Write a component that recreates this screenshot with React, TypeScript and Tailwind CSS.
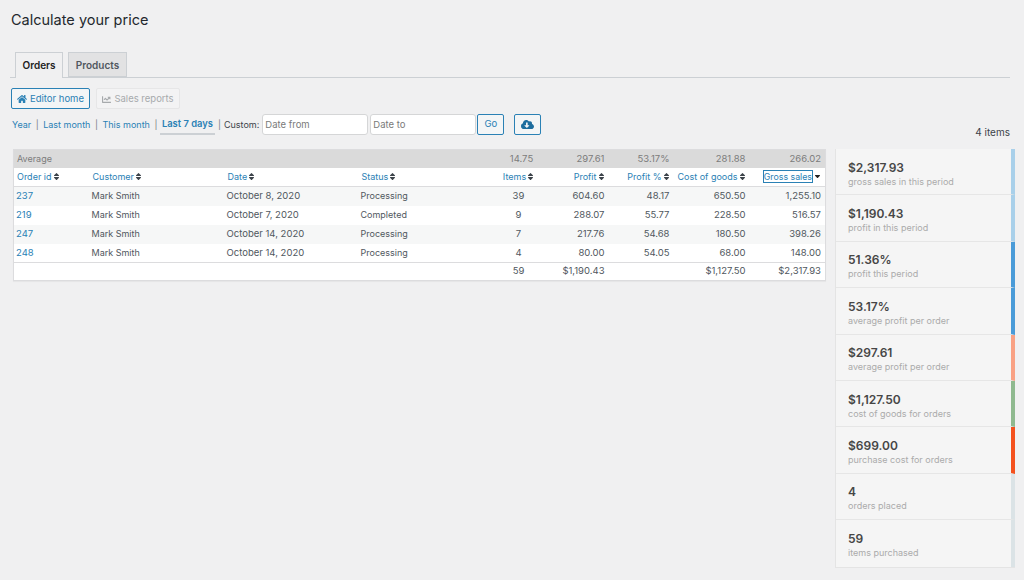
import { FaHome, FaChartLine, FaCloudDownloadAlt, FaSort, FaSortDown } from 'react-icons/fa';

const orders = [
  { id: '237', customer: 'Mark Smith', date: 'October 8, 2020', status: 'Processing', items: '39', profit: '604.60', pct: '48.17', cost: '650.50', gross: '1,255.10' },
  { id: '219', customer: 'Mark Smith', date: 'October 7, 2020', status: 'Completed', items: '9', profit: '288.07', pct: '55.77', cost: '228.50', gross: '516.57' },
  { id: '247', customer: 'Mark Smith', date: 'October 14, 2020', status: 'Processing', items: '7', profit: '217.76', pct: '54.68', cost: '180.50', gross: '398.26' },
  { id: '248', customer: 'Mark Smith', date: 'October 14, 2020', status: 'Processing', items: '4', profit: '80.00', pct: '54.05', cost: '68.00', gross: '148.00' },
];

const stats = [
  { value: '$2,317.93', label: 'gross sales in this period', bar: 'border-r-[#a9d0ea]' },
  { value: '$1,190.43', label: 'profit in this period', bar: 'border-r-[#a9d0ea]' },
  { value: '51.36%', label: 'profit this period', bar: 'border-r-[#4a9bd8]' },
  { value: '53.17%', label: 'average profit per order', bar: 'border-r-[#4a9bd8]' },
  { value: '$297.61', label: 'average profit per order', bar: 'border-r-[#f9a184]' },
  { value: '$1,127.50', label: 'cost of goods for orders', bar: 'border-r-[#8fb98f]' },
  { value: '$699.00', label: 'purchase cost for orders', bar: 'border-r-[#f4511e]' },
  { value: '4', label: 'orders placed', bar: 'border-r-[#dbe3e6]' },
  { value: '59', label: 'items purchased', bar: 'border-r-[#dbe3e6]' },
];

const link = 'text-[#2a81b5]';
const filters = ['Year', 'Last month', 'This month'];

function SortHead({ label, className = '' }: { label: string; className?: string }) {
  return (
    <th className={`h-[19px] whitespace-nowrap text-[9px] font-normal ${className}`}>
      <span className={link}>{label}</span>
      <FaSort className="mr-[-1px] inline size-[9px] align-[-1px] text-[#3c434a]" />
    </th>
  );
}

export default function App() {
  return (
    <div className="h-[580px] w-[1024px] overflow-hidden bg-[#f0f0f1] font-['Inter',sans-serif] text-[9.5px] text-[#50575e]">
      <h1 className="pl-[11px] pt-[11px] text-[14.5px] leading-[18px] text-[#23282d]">Calculate your price</h1>

      <div className="ml-[10px] mr-[14px] mt-[23px] flex h-[26px] gap-[5px] border-b border-[#ccd0d4] pl-[5px]">
        <div className="flex h-[26px] w-[48px] items-center justify-center border border-b-0 border-[#ccd0d4] bg-[#f0f0f1] text-[10px] font-semibold text-[#222]">Orders</div>
        <div className="flex h-[25px] w-[59px] items-center justify-center border border-[#ccd0d4] bg-[#e2e2e3] pt-[1px] text-[10px] font-semibold text-[#50575e]">Products</div>
      </div>

      <div className="ml-[11px] mt-[10px] flex gap-[6px]">
        <button className="flex h-[21px] w-[79px] items-center justify-center gap-[3px] rounded-[2px] border border-[#2a81b5] bg-[#f3f5f6] pt-[1px] text-[#2a81b5]">
          <FaHome className="size-[10px]" />
          Editor home
        </button>
        <button className="flex h-[21px] w-[84px] items-center justify-center gap-[3px] rounded-[2px] border border-[#e6e6e7] bg-[#f3f3f4] pt-[1px] text-[#a7aaad]">
          <FaChartLine className="size-[9px]" />
          Sales reports
        </button>
      </div>

      <div className="ml-[12px] mr-[14px] mt-[5px] flex h-[26px] items-start">
        <div className="flex h-[21px] items-center text-[9px]">
          {filters.map(f => (
            <span key={f} className="flex items-center">
              <span className={link}>{f}</span>
              <span className="mx-[4.5px] text-[#787c82]">|</span>
            </span>
          ))}
          <span className="ml-[-2px] border-b-2 border-[#ccd0d4] px-[2px] pb-[1px] pt-[3px] text-[9.4px] font-semibold text-[#2a81b5]">Last 7 days</span>
          <span className="mx-[3px] text-[#787c82]">|</span>
          <span className="mr-[3px] text-[#3c434a]">Custom:</span>
          <input placeholder="Date from" className="h-[21px] w-[106px] rounded-[3px] border border-[#d5d6d7] bg-white px-[2px] text-[9.5px] placeholder:text-[#7a7a7a]" />
          <input placeholder="Date to" className="ml-[2px] h-[21px] w-[106px] rounded-[3px] border border-[#d5d6d7] bg-white px-[2px] text-[9.5px] placeholder:text-[#7a7a7a]" />
          <button className="ml-[1px] h-[21px] w-[27px] rounded-[2px] border border-[#2a81b5] bg-[#f3f5f6] text-[9.5px] text-[#2a81b5]">Go</button>
          <button className="ml-[10px] flex h-[21px] w-[27px] items-center justify-center rounded-[2px] border border-[#2a81b5] bg-[#f3f5f6] text-[#1d6d9e]">
            <FaCloudDownloadAlt className="size-[13px]" />
          </button>
        </div>
        <span className="ml-auto self-end text-[10px] text-[#3c434a]">4 items</span>
      </div>

      <div className="ml-[13px] mt-[9px] flex items-start gap-[9px]">
        <table className="w-[812px] table-fixed border-collapse border border-[#dcdcde] bg-white shadow-[0_1px_1px_rgba(0,0,0,0.04)]">
          <colgroup>
            <col className="w-[75px]" />
            <col className="w-[135px]" />
            <col className="w-[134px]" />
            <col className="w-[133px]" />
            <col className="w-[56px]" />
            <col className="w-[62px]" />
            <col className="w-[65px]" />
            <col className="w-[76px]" />
            <col className="w-[76px]" />
          </colgroup>
          <thead>
            <tr className="h-[18px] bg-[#dadada] text-[#7c7c7c]">
              <td className="px-[3px] text-[9px]">Average</td>
              <td colSpan={3} />
              <td className="pl-[6px] text-center">14.75</td>
              <td className="px-[4px] text-right">297.61</td>
              <td className="px-[4px] text-right">53.17%</td>
              <td className="px-[4px] text-right">281.88</td>
              <td className="px-[4px] text-right">266.02</td>
            </tr>
            <tr className="border-b border-[#dcdcde]">
              <SortHead label="Order id" className="px-[3px] text-left" />
              <SortHead label="Customer" className="px-[4px] text-left" />
              <SortHead label="Date" className="px-[4px] text-left" />
              <SortHead label="Status" className="px-[4px] text-left" />
              <SortHead label="Items" className="text-center" />
              <SortHead label="Profit" className="px-[4px] text-right" />
              <SortHead label="Profit %" className="px-[4px] text-right" />
              <SortHead label="Cost of goods" className="pr-[4px] text-right" />
              <th className="whitespace-nowrap pr-[3px] text-right font-normal">
                <span className={`${link} inline-block border border-[#2a81b5] text-[8.8px] leading-[11px]`}>Gross sales</span>
                <FaSortDown className="inline size-[9px] align-[1px] text-[#222]" />
              </th>
            </tr>
          </thead>
          <tbody>
            {orders.map(o => (
              <tr key={o.id} className="h-[19px] leading-[12px] odd:bg-[#f6f7f7]">
                <td className={`px-[2px] ${link}`}>{o.id}</td>
                <td className="px-[3px] text-[9px]">{o.customer}</td>
                <td className="px-[3px]">{o.date}</td>
                <td className="px-[3px] text-[9px]">{o.status}</td>
                <td className="text-center">{o.items}</td>
                <td className="px-[4px] text-right">{o.profit}</td>
                <td className="px-[4px] text-right">{o.pct}</td>
                <td className="px-[4px] text-right">{o.cost}</td>
                <td className="px-[4px] text-right">{o.gross}</td>
              </tr>
            ))}
            <tr className="h-[18px] border-t border-[#dcdcde]">
              <td colSpan={4} />
              <td className="text-center">59</td>
              <td className="px-[4px] text-right">$1,190.43</td>
              <td />
              <td className="px-[4px] text-right">$1,127.50</td>
              <td className="px-[4px] text-right">$2,317.93</td>
            </tr>
          </tbody>
        </table>

        <ul className="w-[180px] border-b border-l border-[#e4e4e4]">
          {stats.map(s => (
            <li key={s.value + s.label} className={`flex h-[46.4px] flex-col justify-center border-b border-r-[4px] border-b-[#e6e6e6] bg-[#f5f5f5] pl-[12px] pt-[4px] last:border-b-0 ${s.bar}`}>
              <span className="text-[12px] font-semibold leading-[16px] text-[#464646]">{s.value}</span>
              <span className="text-[9px] leading-[12px] text-[#ababab]">{s.label}</span>
            </li>
          ))}
        </ul>
      </div>
    </div>
  );
}
